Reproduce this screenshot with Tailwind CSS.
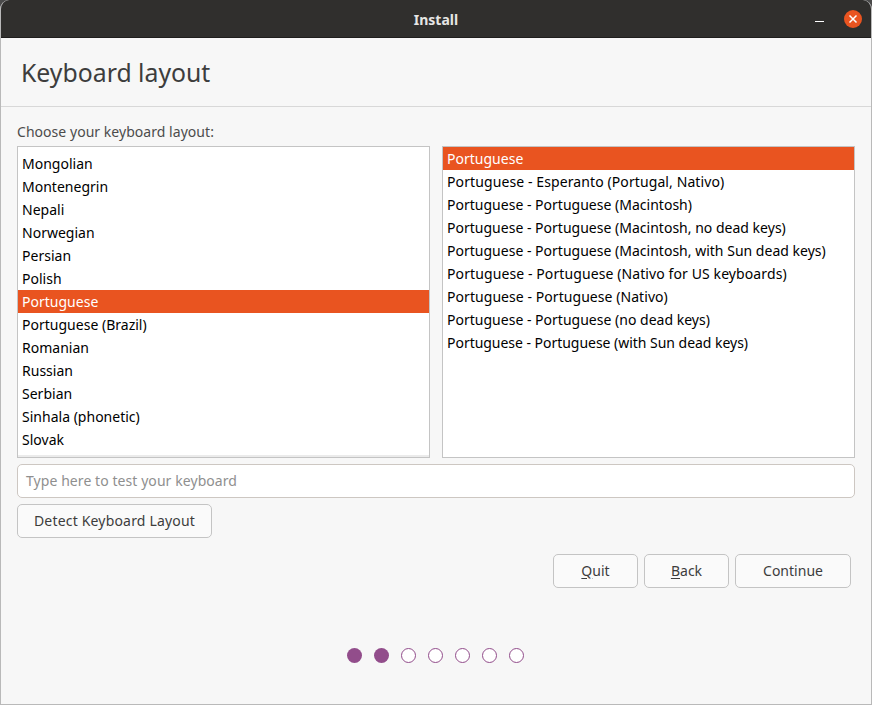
<!DOCTYPE html>
<html lang="en">
  <head>
    <meta charset="UTF-8" />
    <title>Install</title>
    <script src="https://cdn.jsdelivr.net/npm/@tailwindcss/browser@4"></script>
  </head>
  <body class="w-[872px] h-[705px] overflow-hidden bg-[#4a4a4a] font-['Noto_Sans',sans-serif] text-[14px] tracking-[0.01px]">
    <div class="w-[872px] h-[705px] flex flex-col rounded-t-[9px] overflow-hidden bg-[#f7f7f7] border-x border-b border-[#b9b9b9]">
      <!-- title bar -->
      <header class="relative h-[38px] -mx-px shrink-0 flex items-center justify-center pt-[2px] bg-[#302f2d] border-b border-[#1f1e1d]">
        <span class="text-[14px] font-bold text-[#e6e6e4] tracking-normal">Install</span>
        <span class="absolute left-[815px] top-[21px] w-[9px] h-[1px] bg-white"></span>
        <span class="absolute left-[844px] top-[10px] w-[18px] h-[18px] rounded-full bg-[#e95420] flex items-center justify-center">
          <svg width="10" height="10" viewBox="0 0 10 10" fill="none" stroke="#fff" stroke-width="1.5">
            <path d="M1.5 1.5 8.5 8.5M8.5 1.5 1.5 8.5" />
          </svg>
        </span>
      </header>

      <div class="h-[69px] shrink-0 pl-[20px] pt-[15px] border-b border-[#d8d8d8]">
        <h1 class="text-[24.8px] leading-[38px] text-[#3d3d3d] tracking-normal">Keyboard layout</h1>
      </div>

      <main class="flex-1 flex flex-col pl-[16px] pr-[16px]">
        <p class="h-[39px] pt-[15px] leading-[20px] text-[#4c4c4c] tracking-[0.04px]">Choose your keyboard layout:</p>

        <div class="flex gap-[12px] h-[312px]">
          <div class="relative w-[413px] border border-[#c4c4c4] bg-white overflow-hidden pt-[5px] text-black">
            <div class="h-[23px] leading-[23px] px-[4px]">Mongolian</div>
            <div class="h-[23px] leading-[23px] px-[4px]">Montenegrin</div>
            <div class="h-[23px] leading-[23px] px-[4px]">Nepali</div>
            <div class="h-[23px] leading-[23px] px-[4px]">Norwegian</div>
            <div class="h-[23px] leading-[23px] px-[4px]">Persian</div>
            <div class="h-[23px] leading-[23px] px-[4px]">Polish</div>
            <div class="h-[23px] leading-[23px] px-[4px] bg-[#e95420] text-white">Portuguese</div>
            <div class="h-[23px] leading-[23px] px-[4px]">Portuguese (Brazil)</div>
            <div class="h-[23px] leading-[23px] px-[4px]">Romanian</div>
            <div class="h-[23px] leading-[23px] px-[4px]">Russian</div>
            <div class="h-[23px] leading-[23px] px-[4px]">Serbian</div>
            <div class="h-[23px] leading-[23px] px-[4px]">Sinhala (phonetic)</div>
            <div class="h-[23px] leading-[23px] px-[4px]">Slovak</div>
            <!-- scroll undershoot -->
            <div class="absolute inset-x-0 bottom-0 h-[2px] bg-[#ebebeb]"></div>
          </div>
          <div class="w-[413px] border border-[#c4c4c4] bg-white overflow-hidden text-black">
            <div class="h-[23px] leading-[23px] px-[4px] bg-[#e95420] text-white">Portuguese</div>
            <div class="h-[23px] leading-[23px] px-[4px] tracking-[0.1px]">Portuguese - Esperanto (Portugal, Nativo)</div>
            <div class="h-[23px] leading-[23px] px-[4px]">Portuguese - Portuguese (Macintosh)</div>
            <div class="h-[23px] leading-[23px] px-[4px]">Portuguese - Portuguese (Macintosh, no dead keys)</div>
            <div class="h-[23px] leading-[23px] px-[4px]">Portuguese - Portuguese (Macintosh, with Sun dead keys)</div>
            <div class="h-[23px] leading-[23px] px-[4px] tracking-[0.1px]">Portuguese - Portuguese (Nativo for US keyboards)</div>
            <div class="h-[23px] leading-[23px] px-[4px] tracking-[0.06px]">Portuguese - Portuguese (Nativo)</div>
            <div class="h-[23px] leading-[23px] px-[4px]">Portuguese - Portuguese (no dead keys)</div>
            <div class="h-[23px] leading-[23px] px-[4px] tracking-[-0.03px]">Portuguese - Portuguese (with Sun dead keys)</div>
          </div>
        </div>

        <div class="mt-[6px] h-[34px] w-[838px] rounded-[5px] border border-[#cdc7c2] bg-white px-[8px] leading-[32px] text-[#8f8f8f] tracking-[0.07px]">Type here to test your keyboard</div>

        <button class="mt-[6px] h-[34px] w-[195px] rounded-[5px] border border-[#c4c4c4] bg-[#fafafa] pb-[1px] text-[#3d3d3d] tracking-[0.18px]">Detect Keyboard Layout</button>

        <div class="mt-[16px] flex gap-[6px] pl-[536px]">
          <button class="h-[34px] w-[85px] rounded-[5px] border border-[#c4c4c4] bg-[#fafafa] pb-[2px] text-[#3d3d3d]"><span class="underline underline-offset-2">Q</span>uit</button>
          <button class="h-[34px] w-[85px] rounded-[5px] border border-[#c4c4c4] bg-[#fafafa] pb-[2px] text-[#3d3d3d]"><span class="underline underline-offset-2">B</span>ack</button>
          <button class="h-[34px] w-[116px] rounded-[5px] border border-[#c4c4c4] bg-[#fafafa] pb-[2px] text-[#3d3d3d]">Continue</button>
        </div>

        <div class="mt-[60px] flex gap-[12px] pl-[330px]">
          <span class="w-[15px] h-[15px] rounded-full bg-[#924d8b]"></span>
          <span class="w-[15px] h-[15px] rounded-full bg-[#924d8b]"></span>
          <span class="w-[15px] h-[15px] rounded-full border border-[#924d8b] bg-white"></span>
          <span class="w-[15px] h-[15px] rounded-full border border-[#924d8b] bg-white"></span>
          <span class="w-[15px] h-[15px] rounded-full border border-[#924d8b] bg-white"></span>
          <span class="w-[15px] h-[15px] rounded-full border border-[#924d8b] bg-white"></span>
          <span class="w-[15px] h-[15px] rounded-full border border-[#924d8b] bg-white"></span>
        </div>
      </main>
    </div>
  </body>
</html>
